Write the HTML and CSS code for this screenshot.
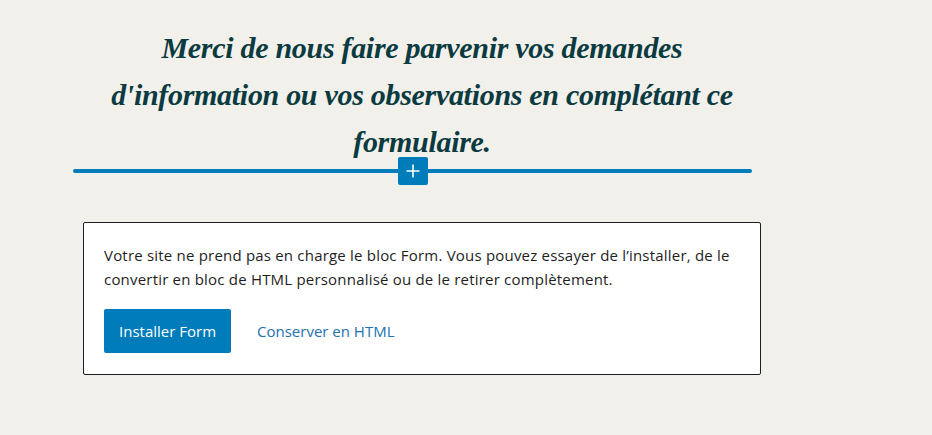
FILE: index.html
```html
<!DOCTYPE html>
<html lang="fr">
<head>
<meta charset="utf-8">
<link rel="stylesheet" href="styles.css">
</head>
<body>
<main class="canvas">
  <h2 class="heading">Merci de nous faire parvenir vos demandes d'information ou vos observations en complétant ce formulaire.</h2>
  <div class="inserter">
    <div class="inserter-line"></div>
    <button class="inserter-btn" aria-label="Ajouter un bloc">
      <svg width="16" height="16" viewBox="0 0 16 16"><path d="M8 1.5v13M1.5 8h13" stroke="#fff" stroke-width="1.6" fill="none"/></svg>
    </button>
  </div>
  <div class="warning">
    <p class="warning-text">Votre site ne prend pas en charge le bloc Form. Vous pouvez essayer de l’installer, de le convertir en bloc de HTML personnalisé ou de le retirer complètement.</p>
    <div class="actions">
      <button class="btn-primary">Installer Form</button>
      <button class="btn-link">Conserver en HTML</button>
    </div>
  </div>
</main>
</body>
</html>
```

FILE: styles.css
```css
html, body {
  margin: 0;
  padding: 0;
  background: #f1f0eb;
}
.canvas {
  width: 932px;
  height: 435px;
  overflow: hidden;
}
.heading {
  margin: 0 0 0 83px;
  width: 678px;
  padding-top: 24px;
  font-family: "Liberation Serif", serif;
  font-style: italic;
  font-weight: bold;
  font-size: 30px;
  line-height: 47px;
  color: #0b3a40;
  text-align: center;
  letter-spacing: -0.3px;
}
.inserter {
  position: relative;
  margin: -8px 0 0 73px;
  width: 679px;
  height: 28px;
  display: flex;
  align-items: center;
  justify-content: center;
}
.inserter-line {
  position: absolute;
  left: 0;
  right: 0;
  top: 12px;
  height: 4px;
  border-radius: 2px;
  background: #007cba;
}
.inserter-btn {
  position: relative;
  width: 30px;
  height: 28px;
  padding: 0;
  border: none;
  border-radius: 2px;
  background: #007cba;
  display: flex;
  align-items: center;
  justify-content: center;
}
.warning {
  margin: 37px 0 0 83px;
  width: 678px;
  height: 153px;
  box-sizing: border-box;
  border: 1px solid #1e1e1e;
  border-radius: 2px;
  background: #fff;
  padding: 20px 20px 0 20px;
  font-family: "Open Sans", "Noto Sans", sans-serif;
  color: #1e1e1e;
}
.warning-text {
  margin: 0;
  font-size: 15px;
  line-height: 24px;
  letter-spacing: 0.2px;
  padding-right: 10px;
}
.actions {
  margin-top: 18px;
  display: flex;
  align-items: center;
  gap: 26px;
}
.btn-primary {
  height: 44px;
  padding: 0 15px;
  border: none;
  border-radius: 2px;
  background: #007cba;
  color: #fff;
  font-family: "Open Sans", "Noto Sans", sans-serif;
  font-size: 15px;
}
.btn-link {
  border: none;
  background: none;
  padding: 0;
  color: #2271b1;
  font-family: "Open Sans", "Noto Sans", sans-serif;
  font-size: 15px;
}
```
